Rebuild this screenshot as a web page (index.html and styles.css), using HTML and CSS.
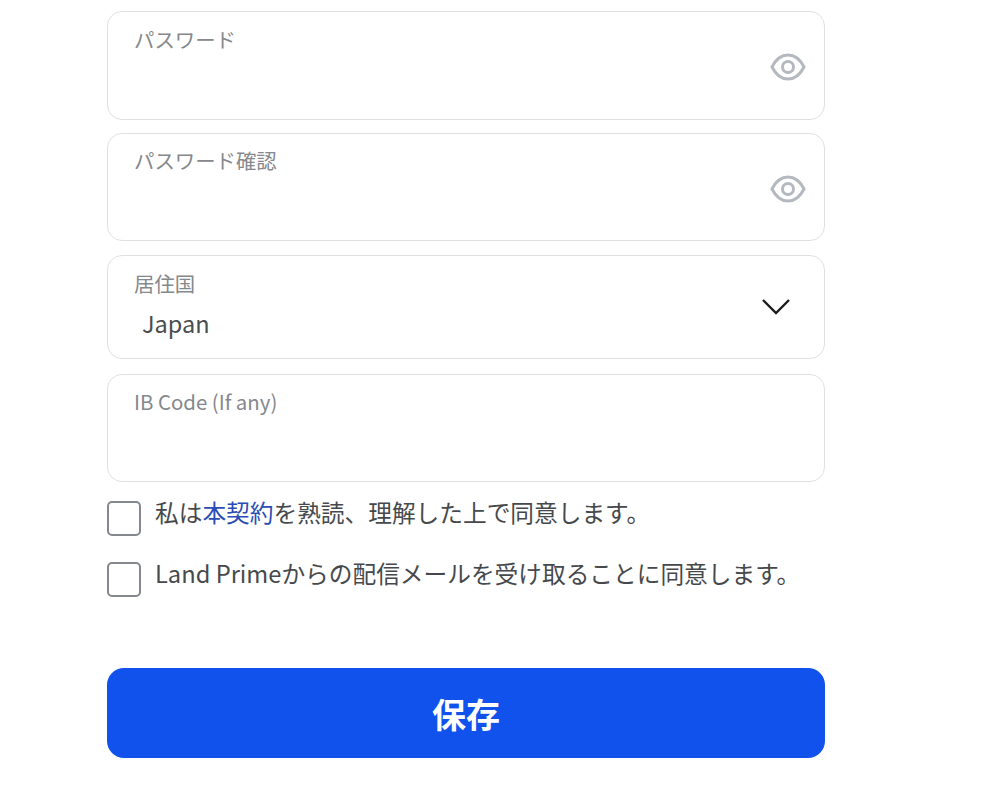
FILE: index.html
```html
<!DOCTYPE html>
<html lang="ja">
<head>
<meta charset="utf-8">
<title>登録</title>
<link rel="stylesheet" href="styles.css">
</head>
<body>
<form class="form">
  <div class="field field-pw">
    <span class="label">パスワード</span>
    <svg class="eye" viewBox="0 0 36 30" width="36" height="30" fill="none" stroke="#b4b9c0" stroke-width="3"><path d="M2 15C6 7 11 3 18 3s12 4 16 12c-4 8-9 12-16 12S6 23 2 15z"/><circle cx="18" cy="15" r="5.5"/></svg>
  </div>
  <div class="field field-pw2">
    <span class="label">パスワード確認</span>
    <svg class="eye" viewBox="0 0 36 30" width="36" height="30" fill="none" stroke="#b4b9c0" stroke-width="3"><path d="M2 15C6 7 11 3 18 3s12 4 16 12c-4 8-9 12-16 12S6 23 2 15z"/><circle cx="18" cy="15" r="5.5"/></svg>
  </div>
  <div class="field field-select">
    <span class="label">居住国</span>
    <span class="value">Japan</span>
    <svg class="chev" viewBox="0 0 30 18" width="30" height="18" fill="none" stroke="#1c1c1c" stroke-width="2.4"><path d="M2 2l13 13L28 2"/></svg>
  </div>
  <div class="field field-ib">
    <span class="label">IB Code (If any)</span>
  </div>
  <div class="check check-one">
    <span class="box"></span>
    <span class="check-text">私は<a class="link">本契約</a>を熟読、理解した上で同意します。</span>
  </div>
  <div class="check check-two">
    <span class="box"></span>
    <span class="check-text">Land Primeからの配信メールを受け取ることに同意します。</span>
  </div>
  <button class="save" type="button">保存</button>
</form>
</body>
</html>
```
FILE: styles.css
```css
* { box-sizing: border-box; }
html, body { margin: 0; padding: 0; background: #fff; }
body {
  height: 788px;
  overflow: hidden;
  font-family: "Noto Sans CJK JP", "Noto Sans", sans-serif;
}
.form {
  width: 718px;
  margin-left: 107px;
  padding-top: 11px;
  display: flex;
  flex-direction: column;
}
.field {
  position: relative;
  height: 109px;
  border: 1.5px solid #dfe0e2;
  border-radius: 15px;
  padding: 12px 26px 0;
}
.field-pw { padding-top: 11.5px; }
.field-pw2 { margin-top: 13px; height: 108px; padding-top: 10.5px; }
.field-select { margin-top: 14px; height: 104px; padding-top: 11.5px; }
.field-ib { margin-top: 15px; height: 108px; padding-top: 10.5px; }
.label {
  display: block;
  font-size: 20.4px;
  line-height: 30px;
  color: #85888c;
}
.value {
  display: block;
  margin: 8.5px 0 0 8px;
  font-size: 23.5px;
  line-height: 34px;
  color: #4a4d50;
}
.eye { position: absolute; right: 18.5px; top: 40px; }
.chev { position: absolute; right: 33px; top: 41.5px; }
.check {
  display: flex;
  align-items: flex-start;
  gap: 14px;
}
.check-one { margin-top: 19px; }
.check-two { margin-top: 26px; }
.box {
  flex: none;
  width: 34px;
  height: 35px;
  border: 2px solid #85888c;
  border-radius: 5px;
}
.check-text {
  font-size: 23.7px;
  line-height: 34px;
  margin-top: -6px;
  color: #46494c;
  white-space: nowrap;
}
.link { color: #2a4db5; }
.save {
  margin-top: 71px;
  height: 90px;
  border: 0;
  border-radius: 17px;
  background: #1152ec;
  color: #fff;
  font-family: inherit;
  font-size: 34px;
  font-weight: 700;
}
```
